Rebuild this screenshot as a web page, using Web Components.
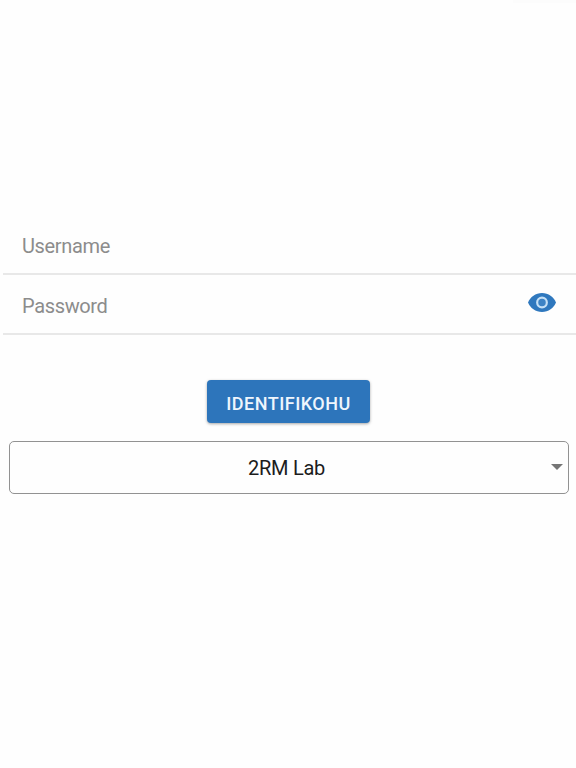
<!DOCTYPE html>
<html lang="en">
<head>
<meta charset="utf-8">
<title>Login</title>
<style>
  body {
    margin: 0;
    min-height: 768px;
    background: #fefefe;
    font-family: Roboto, sans-serif;
    overflow: hidden;
  }
</style>
</head>
<body>
<login-page>
  <form-field label="Username"></form-field>
  <form-field label="Password"><eye-icon slot="end"></eye-icon></form-field>
  <raised-button slot="actions">IDENTIFIKOHU</raised-button>
  <select-box slot="actions">2RM Lab</select-box>
</login-page>

<script>
class LoginPage extends HTMLElement {
  constructor() {
    super();
    this.attachShadow({ mode: "open" });
  }

  connectedCallback() {
    this.shadowRoot.innerHTML = `
      <style>
        :host {
          display: block;
          height: 768px;
        }
        header {
          height: 3px;
          width: 63px;
          margin-left: auto;
          background: #fcfcfc;
        }
        .fields {
          padding: 212px 0 0 3px;
        }
        .actions {
          display: flex;
          flex-direction: column;
          align-items: center;
          gap: 17px;
          padding: 45px 7px 0 9px;
        }
      </style>
      <header></header>
      <div class="fields"><slot></slot></div>
      <div class="actions"><slot name="actions"></slot></div>
    `;
  }
}

class FormField extends HTMLElement {
  constructor() {
    super();
    this.attachShadow({ mode: "open" });
  }

  connectedCallback() {
    this.shadowRoot.innerHTML = `
      <style>
        :host {
          display: flex;
          align-items: center;
          justify-content: space-between;
          box-sizing: border-box;
          height: 60px;
          padding: 3px 20.5px 0 19px;
          border-bottom: 2px solid #e8e8e8;
          color: #8c8c8c;
          font-size: 20px;
          letter-spacing: -.35px;
        }
      </style>
      <span>${this.getAttribute("label")}</span>
      <slot name="end"></slot>
    `;
  }
}

class EyeIcon extends HTMLElement {
  constructor() {
    super();
    this.attachShadow({ mode: "open" });
  }

  connectedCallback() {
    this.shadowRoot.innerHTML = `
      <style>
        :host {
          display: block;
          height: 19px;
          margin-bottom: 6px;
        }
        svg {
          display: block;
        }
      </style>
      <svg width="28" height="19" viewBox="1 4.5 22 15" preserveAspectRatio="none">
        <path fill="#2f78be" d="M12 4.5C7 4.5 2.73 7.61 1 12c1.73 4.39 6 7.5 11 7.5s9.27-3.11 11-7.5c-1.73-4.39-6-7.5-11-7.5z"/>
        <circle cx="12" cy="12" r="3.8" fill="#3d83c5" stroke="#c5e0f6" stroke-width="1.7"/>
      </svg>
    `;
  }
}

class RaisedButton extends HTMLElement {
  constructor() {
    super();
    this.attachShadow({ mode: "open" });
  }

  connectedCallback() {
    this.shadowRoot.innerHTML = `
      <style>
        :host {
          display: block;
          margin-right: 1px;
        }
        button {
          display: block;
          width: 163px;
          height: 43px;
          padding: 4px 0 0;
          border: 0;
          border-radius: 4px;
          background: #2d75bb;
          box-shadow: 0 1px 3px rgba(0, 0, 0, .35);
          color: #eff6fd;
          font: 500 18px Roboto, sans-serif;
          letter-spacing: .48px;
        }
      </style>
      <button><slot></slot></button>
    `;
  }
}

class SelectBox extends HTMLElement {
  constructor() {
    super();
    this.attachShadow({ mode: "open" });
  }

  connectedCallback() {
    this.shadowRoot.innerHTML = `
      <style>
        :host {
          display: grid;
          grid-template-columns: 1fr auto;
          align-items: center;
          box-sizing: border-box;
          width: 100%;
          height: 53px;
          margin-top: 1px;
          padding: 0 5px 0 12px;
          border: 1px solid #929292;
          border-radius: 5px;
          color: #1c1c1c;
          font-size: 20px;
          letter-spacing: -.25px;
          text-align: center;
        }
        svg {
          display: block;
          margin-bottom: 2px;
        }
      </style>
      <span><slot></slot></span>
      <svg width="12" height="6" viewBox="0 0 12 6"><path d="M0 0h12L6 6z" fill="#757575"/></svg>
    `;
  }
}

customElements.define("login-page", LoginPage);
customElements.define("form-field", FormField);
customElements.define("eye-icon", EyeIcon);
customElements.define("raised-button", RaisedButton);
customElements.define("select-box", SelectBox);
</script>
</body>
</html>
